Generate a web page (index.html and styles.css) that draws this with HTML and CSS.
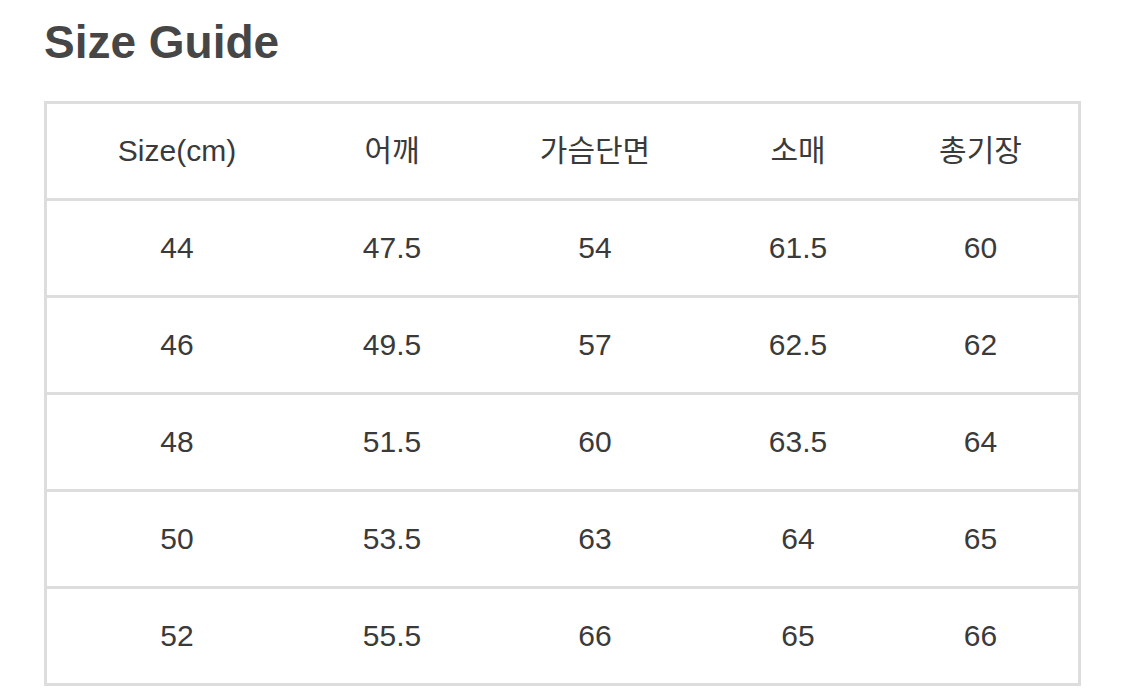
FILE: index.html
```html
<!DOCTYPE html>
<html lang="ko">
<head>
<meta charset="utf-8">
<title>Size Guide</title>
<link rel="stylesheet" href="styles.css">
</head>
<body>
<main class="page">
  <h1 class="title">Size Guide</h1>
  <table class="size-table">
    <colgroup>
      <col class="c-size">
      <col class="c-narrow">
      <col class="c-wide">
      <col class="c-narrow">
      <col class="c-last">
    </colgroup>
    <thead>
      <tr><th>Size(cm)</th><th>어깨</th><th>가슴단면</th><th>소매</th><th>총기장</th></tr>
    </thead>
    <tbody>
      <tr><td>44</td><td>47.5</td><td>54</td><td>61.5</td><td>60</td></tr>
      <tr><td>46</td><td>49.5</td><td>57</td><td>62.5</td><td>62</td></tr>
      <tr><td>48</td><td>51.5</td><td>60</td><td>63.5</td><td>64</td></tr>
      <tr><td>50</td><td>53.5</td><td>63</td><td>64</td><td>65</td></tr>
      <tr><td>52</td><td>55.5</td><td>66</td><td>65</td><td>66</td></tr>
    </tbody>
  </table>
</main>
</body>
</html>
```
FILE: styles.css
```css
html, body {
  margin: 0;
  padding: 0;
  background: #ffffff;
}

.page {
  padding: 19px 0 0 44px;
  font-family: "Liberation Sans", "Noto Sans CJK KR", sans-serif;
}

.title {
  margin: 0;
  font-size: 46px;
  line-height: 46px;
  font-weight: 700;
  color: #464646;
}

.size-table {
  margin-top: 36px;
  width: 1037px;
  table-layout: fixed;
  border-collapse: separate;
  border-spacing: 0;
  border: 3px solid #dddddd;
  color: #3a3a3a;
  font-size: 30px;
}

.c-size { width: 260px; }
.c-narrow { width: 170px; }
.c-wide { width: 236px; }
.c-last { width: 195px; }

.size-table th,
.size-table td {
  padding: 0;
  height: 94px;
  line-height: 94px;
  text-align: center;
  font-weight: 400;
  border-bottom: 3px solid #dddddd;
  white-space: nowrap;
}

.size-table tbody tr:last-child td {
  border-bottom: none;
}
```
